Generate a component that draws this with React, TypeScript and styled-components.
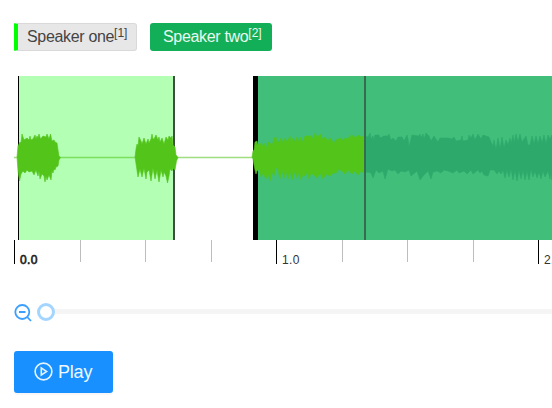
import React from 'react';
import styled, { createGlobalStyle } from 'styled-components';

const GlobalStyle = createGlobalStyle`
  * { box-sizing: border-box; }
  body {
    margin: 0;
    background: #fff;
    overflow: hidden;
    font-family: "Liberation Sans", Arial, sans-serif;
  }
`;

const Page = styled.main`
  width: 552px;
  height: 408px;
  padding: 23px 0 0 14px;
  display: flex;
  flex-direction: column;
  overflow: hidden;
`;

const Labels = styled.div`
  display: flex;
  gap: 13px;
  height: 28px;
`;

const Label = styled.span<{ $active?: boolean }>`
  display: block;
  width: ${(p) => (p.$active ? 122 : 123)}px;
  height: 28px;
  padding-left: ${(p) => (p.$active ? 13 : 9)}px;
  border: ${(p) => (p.$active ? '0' : '1px solid #d9d9d9')};
  border-left: ${(p) => (p.$active ? '0' : '4px solid #00ff00')};
  border-radius: ${(p) => (p.$active ? '3px' : '1px 3px 3px 1px')};
  background: ${(p) => (p.$active ? '#13ae58' : '#e7e7e7')};
  color: ${(p) => (p.$active ? '#e9f9f0' : '#444')};
  font-size: 16px;
  letter-spacing: -0.33px;
  line-height: ${(p) => (p.$active ? 28 : 26)}px;
  white-space: nowrap;
`;

const Hotkey = styled.sup`
  font-size: 12px;
  letter-spacing: 0;
  line-height: 0;
  vertical-align: baseline;
  position: relative;
  top: -5px;
`;

const WaveArea = styled.section`
  position: relative;
  width: 538px;
  height: 164px;
  margin-top: 25px;
`;

const Region = styled.div<{ $start: number; $width: number; $color: string; $left: string; $right: string }>`
  position: absolute;
  top: 0;
  bottom: 0;
  left: ${(p) => p.$start}px;
  width: ${(p) => p.$width}px;
  background: ${(p) => p.$color};
  border-left: ${(p) => p.$left};
  border-right: ${(p) => p.$right};
`;

const Wave = styled.svg`
  position: absolute;
  inset: 0;
  width: 538px;
  height: 164px;
`;

const Cursor = styled.div`
  position: absolute;
  top: 0;
  bottom: 0;
  left: 350px;
  width: 2px;
  background: #386c50;
`;

const Timeline = styled.div`
  display: flex;
  height: 26px;
`;

const Second = styled.div`
  flex: 0 0 262px;
  display: grid;
  grid-template-columns: 66px 65px 66px 65px;
`;

const Tick = styled.div<{ $major?: boolean; $bold?: boolean }>`
  height: ${(p) => (p.$major ? 24 : 22)}px;
  border-left: 1px solid ${(p) => (p.$major ? '#000' : '#bdbdbd')};
  padding: 13px 0 0 5px;
  font-size: 12px;
  letter-spacing: 0.4px;
  line-height: 14px;
  color: #333;
  -webkit-text-stroke: ${(p) => (p.$bold ? '0.6px #111' : '0')};
`;

const ZoomRow = styled.div`
  display: flex;
  align-items: center;
  height: 20px;
  margin-top: 36px;
`;

const ZoomIcon = styled.svg`
  flex: none;
  width: 18px;
  height: 18px;
  margin-top: 2px;
`;

const Slider = styled.div`
  flex: 1;
  display: flex;
  align-items: center;
  margin-left: 5px;
`;

const Handle = styled.span`
  flex: none;
  width: 18px;
  height: 18px;
  border: 3px solid #a3d5ff;
  border-radius: 50%;
  background: #fff;
`;

const Rail = styled.span`
  flex: 1;
  height: 5px;
  margin-bottom: 1px;
  background: #f5f5f5;
`;

const PlayButton = styled.button`
  display: flex;
  align-items: center;
  width: 99px;
  height: 42px;
  margin-top: 29px;
  padding: 0 0 0 20px;
  gap: 5px;
  border: 0;
  border-radius: 3px;
  background: #1890ff;
  box-shadow: 0 2px 0 rgba(0, 0, 0, 0.03);
  color: #f0f8ff;
  font: 18px "Liberation Sans", Arial, sans-serif;
  letter-spacing: -0.2px;
`;

const PlayIcon = styled.svg`
  width: 19px;
  height: 19px;
  margin-top: -2px;
`;

type Point = [number, number];

const BURST_ONE: Point[] = [
  [17, 157], [18, 146], [20, 142], [21, 143], [22, 134], [24, 140], [27, 138], [29, 140], [30, 136], [31, 140], [33, 139], [35, 135], [36, 139], [37, 136], [38, 138], [39, 134], [40.5, 139], [43, 136], [46, 137], [47, 134], [49, 139], [50.5, 134], [52, 141], [54, 140], [55, 142], [57, 143], [58, 150], [59, 156], [60.5, 157.5],
  [59, 160], [58, 166], [56, 167], [55, 170], [54, 169], [53, 173], [52, 171], [51, 180], [49, 175], [47, 180], [46, 176], [45, 182], [44, 176], [42, 174], [40, 179], [39, 171], [38, 176], [36, 170], [34, 175], [32, 171], [29, 172], [27, 170], [25, 173], [23, 171], [21, 174], [19.5, 181], [18, 171],
];

const BURST_TWO: Point[] = [
  [135, 157], [136, 149], [137, 144], [138, 146], [139, 137], [141, 141], [142, 144], [144, 138], [146, 144], [148, 139], [149, 143], [151, 139], [152, 134], [153, 139], [154, 139], [156, 135], [158, 140], [159, 137], [160, 142], [162, 138], [164, 144], [166, 137], [168, 140], [169, 136], [171, 138], [172, 136], [173, 145], [175, 147], [176, 155], [178, 157.5],
  [176.5, 161], [175, 170], [173, 168], [172, 171], [170, 169], [169, 176], [167.5, 183], [166, 176], [164, 172], [163, 177], [161, 170], [159, 182], [157, 170], [155, 179], [153, 168], [151, 181], [149, 170], [147, 172], [146, 179], [144, 168], [142, 177], [140, 169], [138, 177], [136.5, 167],
];

// Silhouette of the long passage: alternating shallow and tall samples.
const LONG_TOP: Point[] = [
  [252, 157], [253, 151], [254, 150], [255, 142], [257, 141], [258, 145], [260, 143], [262, 146], [264, 143], [266, 149], [268, 142], [271, 144], [272, 146], [273, 142], [274, 138], [276, 137], [277, 142], [279, 142], [281, 138], [283, 143], [285, 138], [287, 142], [290, 136], [291, 143], [293, 138], [295, 142], [297, 137], [298, 142], [300, 137], [303, 142], [305, 136], [311, 136], [312, 139], [314, 136], [315, 133], [317, 137], [321, 134], [322, 139], [325, 137], [328, 141], [330, 138], [334, 143], [336, 140], [341, 138], [343, 141], [345, 138], [348, 139], [350, 135], [351, 139], [353, 135], [355, 138], [358, 135], [361, 137], [364, 136],
  [368, 137], [370, 133], [371, 139], [373, 136], [374, 141], [375, 135], [379, 135], [380, 138], [384, 136], [388, 136], [389, 134], [391, 140], [393, 138], [396, 141], [398, 137], [402, 137], [404, 141], [407, 135], [408, 139], [409, 147], [412, 135], [419, 136], [420, 134], [421, 138], [423, 134], [424, 139], [426, 133], [429, 136], [431, 141], [434, 136], [438, 142], [440, 138], [448, 138],
  [452, 139], [454, 137], [456, 141], [461, 140], [462, 136], [463, 141], [468, 140], [469, 135], [471, 138], [473, 134], [475, 140], [478, 134], [481, 139], [483, 135], [489, 137], [491, 142], [493, 146], [494, 140], [496, 150], [498, 138], [500, 149], [502, 137], [504, 148], [506, 140], [508, 145], [510, 138], [511, 144], [513, 135], [514, 143], [516, 134], [518, 142], [520, 134], [522, 142], [526, 136], [528, 145], [530, 145], [532, 136], [534, 144], [536, 136], [538, 144], [540, 136], [542, 143], [544, 135], [546, 144], [548, 135], [550, 139], [552, 135],
];

const LONG_BOTTOM: Point[] = [
  [552, 180], [551, 172], [550, 179], [548, 171], [545, 177], [543, 171], [541, 179], [539, 172], [537, 178], [535, 171], [533, 177], [531, 169], [529, 180], [527, 171], [525, 180], [523, 170], [521, 179], [519, 170], [517, 181], [515, 170], [513, 180], [511, 169], [509, 177], [507, 170], [505, 178], [503, 170], [501, 174], [499, 171], [497, 174], [494, 170], [490, 170], [488, 176], [484, 175], [482, 171], [480, 173], [478, 170], [473, 174], [471, 170], [467, 174], [464, 171], [459, 173], [457, 170], [453, 173],
  [448, 171], [444, 170], [441, 173], [437, 171], [433, 172], [431, 179], [428, 171], [424, 175], [420, 180], [417, 171], [411, 176], [409, 170], [405, 172], [401, 171], [398, 174], [395, 170], [392, 171], [388, 169], [385, 179], [383, 171], [379, 173], [376, 170], [373, 178], [371, 173], [368, 172],
  [364, 173], [361, 171], [358, 175], [355, 171], [352, 174], [348, 170], [345, 174], [342, 171], [339, 169], [336, 173], [333, 173], [330, 176], [326, 174], [323, 179], [320, 173], [317, 178], [314, 175], [311, 173], [309, 179], [307, 172], [305, 176], [303, 174], [301, 180], [299, 172], [297, 178], [295, 171], [292, 180], [290, 170], [288, 179], [286, 171], [284, 178], [282, 169], [280, 179], [278, 170], [276, 167], [274, 176], [272, 172], [270, 181], [268, 173], [266, 179], [263, 173], [261, 177], [259, 169], [257, 171], [256, 174], [255, 170], [254, 165], [253, 159],
];

const pointList = (points: Point[]) => points.map((p) => p.join(',')).join(' ');

const Waveform = () => (
  <Wave viewBox="14 76 538 164">
    <defs>
      <clipPath id="played"><rect x="14" y="76" width="351" height="164" /></clipPath>
      <clipPath id="remaining"><rect x="365" y="76" width="187" height="164" /></clipPath>
    </defs>
    <path d="M14 157.5H253" stroke="#52c41a" strokeOpacity="0.55" strokeWidth="1.5" />
    <g fill="#52c41a" stroke="#52c41a" strokeWidth="0.6">
      <polygon points={pointList(BURST_ONE)} />
      <polygon points={pointList(BURST_TWO)} />
      <polygon points={pointList([...LONG_TOP, ...LONG_BOTTOM])} clipPath="url(#played)" />
    </g>
    <polygon points={pointList([...LONG_TOP, ...LONG_BOTTOM])} fill="#2daa6b" stroke="#2daa6b" strokeWidth="0.6" clipPath="url(#remaining)" />
  </Wave>
);

const SECONDS = ['0.0', '1.0', '2.0'];

export default function App() {
  return (
    <Page>
      <GlobalStyle />
      <Labels>
        <Label>Speaker one<Hotkey>[1]</Hotkey></Label>
        <Label $active>Speaker two<Hotkey>[2]</Hotkey></Label>
      </Labels>
      <WaveArea>
        <Region $start={4} $width={157} $color="#b3ffb3" $left="1px solid #000" $right="2px solid #3c503c" />
        <Region $start={239} $width={299} $color="#42be7b" $left="5px solid #000" $right="0" />
        <Waveform />
        <Cursor />
      </WaveArea>
      <Timeline>
        {SECONDS.map((label, index) => (
          <Second key={label}>
            <Tick $major $bold={index === 0}>{label}</Tick>
            <Tick />
            <Tick />
            <Tick />
          </Second>
        ))}
      </Timeline>
      <ZoomRow>
        <ZoomIcon viewBox="0 0 18 18" fill="none" stroke="#3b9fff" strokeWidth="1.8">
          <circle cx="8.3" cy="8" r="7" />
          <path d="M5 8H11.5M13.2 13L17 17" />
        </ZoomIcon>
        <Slider>
          <Handle />
          <Rail />
        </Slider>
      </ZoomRow>
      <PlayButton type="button">
        <PlayIcon viewBox="0 0 19 19" fill="none" stroke="#e5f3ff" strokeWidth="1.6">
          <circle cx="9.5" cy="9.5" r="8.4" />
          <path d="M7.3 5.9V13.1L12.6 9.5Z" />
        </PlayIcon>
        Play
      </PlayButton>
    </Page>
  );
}
